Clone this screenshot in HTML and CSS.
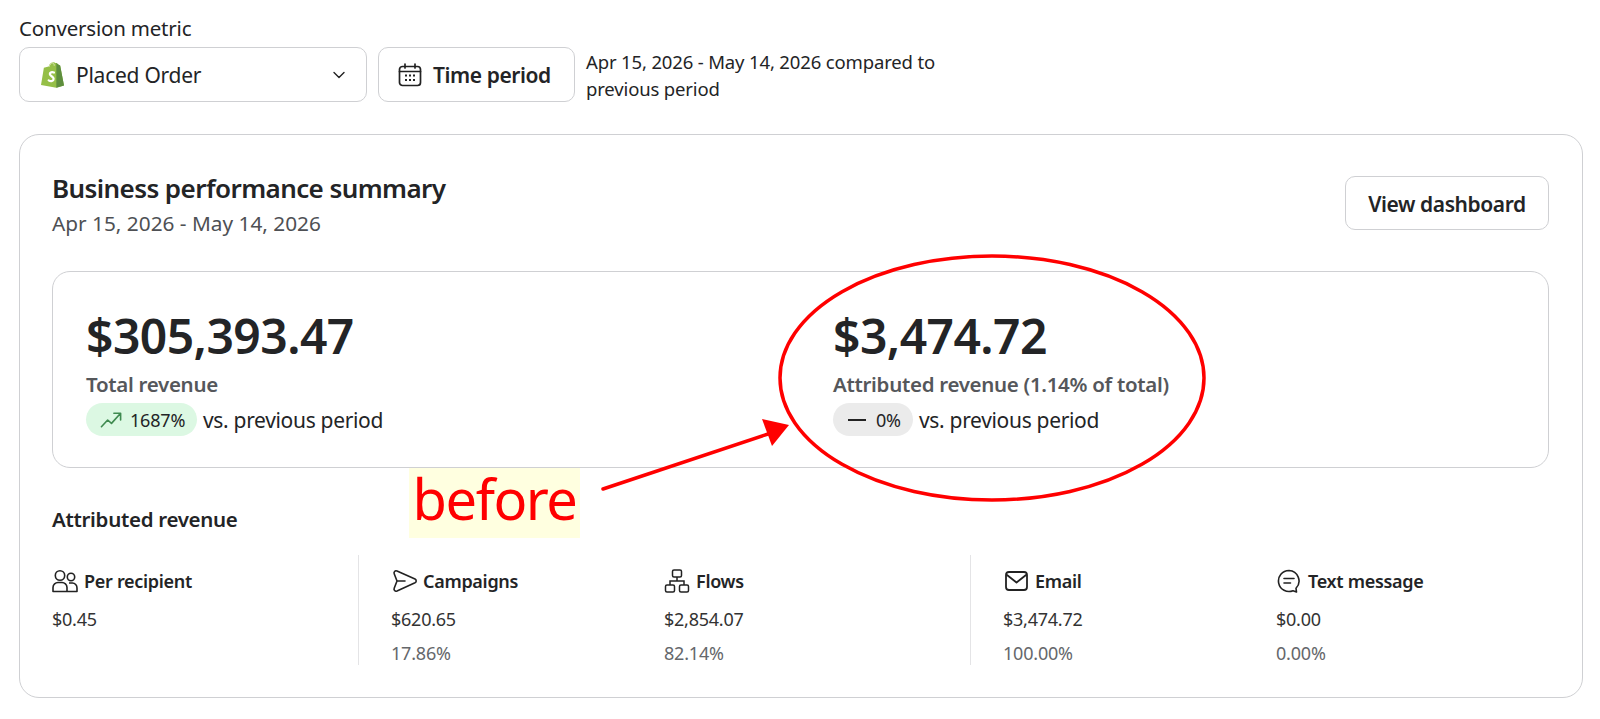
FILE: index.html
```html
<!DOCTYPE html>
<html lang="en">
<head>
<meta charset="utf-8">
<title>Business performance summary</title>
<link rel="stylesheet" href="styles.css">
</head>
<body>
<div class="page">
  <div class="field-label">Conversion metric</div>
  <div class="filters">
    <div class="select">
      <svg class="shop" viewBox="0 0 24 28"><path fill="#95bf47" d="M3 6.500 8 5C9 2 11 .6 13 .6c1 0 1.600.4 2 1l1.400-.1 1.600 1.500 2 1.300L24 25 16 27.400 0 24.500Z"/><path fill="#5e8e3e" d="M16 1.500 18 3l2 1L24 25l-8 2.400Z"/><path fill="none" stroke="#fff" stroke-width="2.300" stroke-linecap="round" d="M13.500 11.500c-2-.9-4.300-.2-4.300 1.500 0 2.200 4 2.400 4 5 0 2.400-2.900 3-5.200 1.600"/><path fill="none" stroke="#d9e8b8" stroke-width="1" d="M8.500 5.500c.5-2.500 2-4 3.500-4 1.500 0 1.800 1.500 1.800 2.800"/></svg>
      <span class="select-text">Placed Order</span>
      <svg class="chev" viewBox="0 0 14 14"><path d="M2 4.500 7 9.500 12 4.500" fill="none" stroke="#222" stroke-width="1.400" stroke-linecap="round" stroke-linejoin="round"/></svg>
    </div>
    <div class="btn btn-period">
      <svg class="cal" viewBox="0 0 24 24"><rect x="1.500" y="3.500" width="21" height="19" rx="3" fill="none" stroke="#222" stroke-width="1.700"/><path d="M1.500 8.500h21M7 1v4M17 1v4" stroke="#222" stroke-width="1.700" stroke-linecap="round"/><path d="M7 12.500h2M11 12.500h2M15 12.500h2M7 17h2M11 17h2M15 17h2" stroke="#222" stroke-width="1.800"/></svg>
      <span>Time period</span>
    </div>
    <div class="period-note">Apr 15, 2026 - May 14, 2026 compared to previous period</div>
  </div>

  <section class="card">
    <header class="card-head">
      <div>
        <h1>Business performance summary</h1>
        <div class="dates">Apr 15, 2026 - May 14, 2026</div>
      </div>
      <div class="btn btn-dash">View dashboard</div>
    </header>

    <div class="totals">
      <div class="total">
        <div class="amount">$305,393.47</div>
        <div class="amount-label">Total revenue</div>
        <div class="compare">
          <span class="pill pill-up">
            <svg class="trend" viewBox="0 0 24 18"><path d="M1.500 16 8 9l4 3.500L21 2.500M14.500 2H21.500V9" fill="none" stroke="#3f8a50" stroke-width="1.700" stroke-linecap="round" stroke-linejoin="round"/></svg>
            1687%
          </span>
          <span>vs. previous period</span>
        </div>
      </div>
      <div class="total">
        <div class="amount">$3,474.72</div>
        <div class="amount-label">Attributed revenue (1.14% of total)</div>
        <div class="compare">
          <span class="pill pill-flat"><i class="dash"></i>0%</span>
          <span>vs. previous period</span>
        </div>
      </div>
    </div>

    <h2>Attributed revenue</h2>
    <div class="metrics">
      <div class="group group-first">
        <div class="metric">
          <div class="metric-head">
            <svg class="ico" viewBox="0 0 26 24"><circle cx="8" cy="6.500" r="4.700" fill="none" stroke="#222" stroke-width="1.600"/><circle cx="19" cy="8" r="3.700" fill="none" stroke="#222" stroke-width="1.600"/><path d="M1 22.500v-4c0-3 2.500-5 5-5h4c2.500 0 5 2 5 5v4ZM15 22.500h10v-3.500c0-2.500-2-5-4.500-5H17" fill="none" stroke="#222" stroke-width="1.600" stroke-linejoin="round"/></svg>
            Per recipient
          </div>
          <div class="val">$0.45</div>
        </div>
      </div>
      <div class="group">
        <div class="metric">
          <div class="metric-head">
            <svg class="ico" viewBox="0 0 26 24"><path d="M6 2 24 10c1.600.8 1.600 3 0 3.800L6 22c-2 .8-3.500-1-2.800-2.800L6 12 3.200 4.800C2.500 3 4 1.200 6 2ZM6 12h8" fill="none" stroke="#222" stroke-width="1.600" stroke-linejoin="round" stroke-linecap="round"/></svg>
            Campaigns
          </div>
          <div class="val">$620.65</div>
          <div class="pct">17.86%</div>
        </div>
        <div class="metric">
          <div class="metric-head">
            <svg class="ico" viewBox="0 0 26 24"><rect x="8.500" y="1" width="9" height="7" rx="1.500" fill="none" stroke="#222" stroke-width="1.500"/><rect x="1.500" y="16" width="9" height="7" rx="1.500" fill="none" stroke="#222" stroke-width="1.500"/><rect x="15.500" y="16" width="9" height="7" rx="1.500" fill="none" stroke="#222" stroke-width="1.500"/><path d="M13 8v4M6 16v-4h14v4" fill="none" stroke="#222" stroke-width="1.500"/></svg>
            Flows
          </div>
          <div class="val">$2,854.07</div>
          <div class="pct">82.14%</div>
        </div>
      </div>
      <div class="group">
        <div class="metric">
          <div class="metric-head">
            <svg class="ico" viewBox="0 0 26 24"><rect x="3" y="3" width="21" height="18" rx="3" fill="none" stroke="#222" stroke-width="1.800"/><path d="M4 6l9.500 7.500L23 6" fill="none" stroke="#222" stroke-width="1.800" stroke-linecap="round" stroke-linejoin="round"/></svg>
            Email
          </div>
          <div class="val">$3,474.72</div>
          <div class="pct">100.00%</div>
        </div>
        <div class="metric">
          <div class="metric-head">
            <svg class="ico" viewBox="0 0 26 24"><path d="M13 1.500a10.500 10.500 0 1 0 4 20.200l3.500 1.300-.5-3.700A10.500 10.500 0 0 0 13 1.500Z" fill="none" stroke="#222" stroke-width="1.600" stroke-linejoin="round"/><path d="M8 9.500h10M8 14h6.500" stroke="#222" stroke-width="1.600" stroke-linecap="round"/></svg>
            Text message
          </div>
          <div class="val">$0.00</div>
          <div class="pct">0.00%</div>
        </div>
      </div>
    </div>
  </section>
</div>

<svg class="annot" viewBox="0 0 1600 719" aria-hidden="true">
  <ellipse cx="992" cy="378" rx="212" ry="122" fill="none" stroke="#f00" stroke-width="3.500"/>
  <path d="M603 489 768 434" stroke="#f00" stroke-width="3.500" stroke-linecap="round"/>
  <path d="M789 425 762 419 772 446Z" fill="#f00"/>
</svg>
<div class="before">before</div>
</body>
</html>
```
FILE: styles.css
```css
* { box-sizing: border-box; }
html, body { margin: 0; padding: 0; background: #fff; }
body {
  font-family: "Noto Sans", "Open Sans", "Liberation Sans", sans-serif;
  color: #232426;
  height: 719px;
  overflow: hidden;
  position: relative;
}
.page { padding: 16px 17px 0 19px; }
.field-label { font-size: 20.500px; line-height: 24px; letter-spacing: -.2px; margin-bottom: 7px; }
.filters { display: flex; align-items: center; height: 55px; }
.select, .btn {
  display: flex;
  align-items: center;
  border: 1px solid #cfd0d3;
  border-radius: 10px;
  background: #fff;
}
.select { width: 348px; height: 55px; padding: 0 20px 0 21px; }
.shop { width: 23px; height: 28px; flex: none; }
.select-text { font-size: 21px; letter-spacing: -.25px; margin-left: 12px; flex: 1; }
.chev { width: 14px; height: 14px; }
.btn { font-weight: 600; font-size: 21px; letter-spacing: -.42px; }
.btn-period { width: 197px; height: 55px; margin-left: 11px; padding-left: 19px; gap: 11px; }
.cal { width: 24px; height: 24px; flex: none; }
.period-note { width: 380px; margin-left: 11px; font-size: 18.500px; line-height: 27px; letter-spacing: -.15px; }

.card {
  margin-top: 32px;
  width: 1564px;
  height: 564px;
  border: 1px solid #cfd0d3;
  border-radius: 20px;
  padding: 35px 33px 0 32px;
}
.card-head { display: flex; justify-content: space-between; align-items: flex-start; }
h1 { margin: 0; font-size: 26px; line-height: 36px; font-weight: 600; letter-spacing: -.58px; }
.dates { font-size: 20.800px; line-height: 26px; margin-top: 4px; color: #4e5054; }
.btn-dash { width: 204px; height: 54px; margin-top: 6px; padding-top: 2px; justify-content: center; }

.totals {
  margin-top: 35px;
  height: 197px;
  border: 1px solid #cfd0d3;
  border-radius: 18px;
  padding: 32px 32px 0 33px;
  display: grid;
  grid-template-columns: 1fr 1fr;
  column-gap: 64px;
}
.amount { font-size: 48px; line-height: 64px; font-weight: 600; letter-spacing: -.55px; }
.amount-label { font-size: 20.500px; font-weight: 600; line-height: 26px; margin-top: 3px; color: #55575b; letter-spacing: -.3px; }
.compare { display: flex; align-items: center; gap: 6px; font-size: 21px; letter-spacing: -.32px; margin-top: 6px; }
.pill {
  display: flex;
  align-items: center;
  height: 33px;
  border-radius: 17px;
  font-size: 18px;
  letter-spacing: -.2px;
}
.pill-up { width: 111px; background: #dcf8e3; padding-left: 14px; gap: 7px; }
.trend { width: 23px; height: 18px; }
.pill-flat { width: 80px; background: #ebebeb; padding-left: 15px; gap: 10px; }
.dash { width: 18px; height: 2px; background: #222; display: block; }

h2 { margin: 38px 0 0; font-size: 20.500px; line-height: 26px; font-weight: 600; letter-spacing: -.3px; }
.metrics { display: grid; grid-template-columns: 306px 612px 1fr; margin-top: 23px; height: 110px; }
.group { display: grid; grid-template-columns: 273px 272px; padding-left: 32px; border-left: 1px solid #e4e4e6; }
.group-first { border-left: 0; padding-left: 0; grid-template-columns: 1fr; }
.metric-head { display: flex; align-items: center; gap: 6px; font-size: 18px; font-weight: 600; line-height: 28px; margin-top: 12px; letter-spacing: -.3px; }
.ico { width: 26px; height: 24px; flex: none; }
.val { font-size: 18px; line-height: 24px; margin-top: 12px; letter-spacing: -.25px; color: #333; }
.pct { font-size: 18px; line-height: 24px; margin-top: 10px; color: #65676b; letter-spacing: -.2px; }

.annot { position: absolute; left: 0; top: 0; width: 1600px; height: 719px; pointer-events: none; }
.before {
  position: absolute;
  left: 409px;
  top: 468px;
  width: 171px;
  height: 70px;
  background: #ffffe0;
  color: #f00;
  font-size: 56px;
  line-height: 60px;
  text-align: center;
  letter-spacing: -1.500px;
}
```
